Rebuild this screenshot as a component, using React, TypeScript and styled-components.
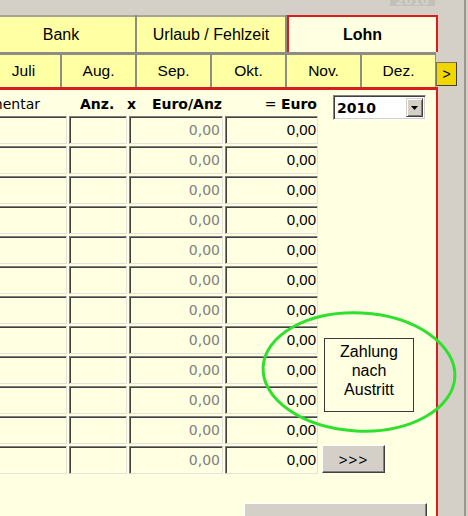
import React from 'react'
import styled, { createGlobalStyle, css } from 'styled-components'

const cream = '#ffffe1'
const tabYellow = '#ffffa4'
const red = '#d61e1e'
const winGrey = '#d4d0c8'
const lineGrey = '#8e8c84'

const GlobalStyle = createGlobalStyle`
  html, body {
    margin: 0;
    padding: 0;
    background: ${winGrey};
  }
  body {
    font-family: "Liberation Sans", Arial, sans-serif;
    overflow: hidden;
  }
`

const Window = styled.div`
  position: relative;
  width: 468px;
  height: 516px;
  overflow: hidden;
  display: flex;
  background: ${winGrey};
`

const Main = styled.div`
  width: 464px;
  display: flex;
  flex-direction: column;
  overflow: hidden;
`

const Edge = styled.div`
  width: 4px;
  box-sizing: border-box;
  border-left: 2px solid #9a968e;
`

const TopStrip = styled.div`
  height: 15px;
  flex: none;
  padding-left: 390px;
`

const GhostBox = styled.div`
  width: 45px;
  height: 6px;
  background: #c3c0ba;
  overflow: hidden;
  color: #d3d0ca;
  font: bold 12px "DejaVu Sans", sans-serif;
  line-height: 2px;
  text-align: center;
`

const TabRow = styled.div`
  width: 438px;
  height: 37px;
  flex: none;
  display: flex;
  gap: 2px;
  background: ${lineGrey};
`

const Tab = styled.div<{ $active?: boolean; $first?: boolean }>`
  width: 148px;
  box-sizing: border-box;
  display: flex;
  align-items: center;
  justify-content: center;
  font-size: 16px;
  color: #000;
  background: ${tabYellow};
  border-top: 2px solid #a6a492;
  margin-left: ${({ $first }) => ($first ? '-13px' : '0')};
  ${({ $active }) =>
    $active &&
    css`
      width: 151px;
      background: ${cream};
      border: 2px solid ${red};
      border-bottom: none;
      font-weight: bold;
    `}
`

const MonthRow = styled.div`
  height: 35px;
  flex: none;
  display: flex;
`

const MonthStrip = styled.div`
  width: 436px;
  box-sizing: border-box;
  display: flex;
  gap: 2px;
  padding-top: 3px;
  background: ${lineGrey};
`

const Month = styled.div<{ $first?: boolean }>`
  width: 73px;
  flex: none;
  display: flex;
  align-items: center;
  justify-content: center;
  font-size: 15.5px;
  background: ${tabYellow};
  margin-left: ${({ $first }) => ($first ? '-13px' : '0')};
`

const NextButton = styled.div`
  width: 21px;
  height: 24px;
  box-sizing: border-box;
  align-self: flex-end;
  margin-bottom: 1px;
  display: flex;
  align-items: center;
  justify-content: center;
  font-size: 14px;
  background: #f2d600;
  border: 1px solid #7c7458;
  border-right-color: #404040;
  border-bottom-color: #404040;
`

const Content = styled.div`
  width: 438px;
  flex: 1;
  box-sizing: border-box;
  background: ${cream};
  border-top: 3px solid ${red};
  border-right: 2px solid ${red};
  padding-top: 4px;
  display: flex;
  flex-direction: column;
`

const Grid = styled.div`
  margin-left: -13px;
  display: grid;
  grid-template-columns: 80px 58px 94px 93px 1fr;
  grid-template-rows: 20px repeat(12, 28px);
  column-gap: 2px;
  row-gap: 2px;
`

const HeadCell = styled.div<{ $justify?: string; $pad?: string }>`
  display: flex;
  align-items: center;
  justify-content: ${({ $justify = 'flex-start' }) => $justify};
  padding: ${({ $pad = '0' }) => $pad};
  font-family: "DejaVu Sans", Verdana, sans-serif;
  font-size: 14px;
  white-space: nowrap;
`

const Bold = styled.span`
  font-weight: bold;
`

const Field = styled.div<{ $muted?: boolean }>`
  box-sizing: border-box;
  height: 28px;
  display: flex;
  align-items: center;
  justify-content: flex-end;
  background: ${cream};
  border-top: 1px solid #808080;
  border-left: 1px solid #808080;
  border-bottom: 1px solid #e4e2da;
  border-right: 1px solid #e4e2da;
  box-shadow: inset 1px 1px 0 #404040;
  ${({ $muted }) =>
    $muted
      ? css`
          font-family: "DejaVu Sans", Verdana, sans-serif;
          font-size: 14px;
          color: #808080;
          padding-right: 2px;
        `
      : css`
          font-size: 15px;
          color: #000;
          padding-right: 1px;
          padding-bottom: 2px;
        `}
`

const YearSelect = styled.div`
  grid-column: 5;
  grid-row: 1;
  align-self: start;
  margin: 1px 0 0 13px;
  width: 93px;
  height: 25px;
  box-sizing: border-box;
  display: flex;
  align-items: center;
  background: #fff;
  border-top: 1px solid #808080;
  border-left: 1px solid #808080;
  border-bottom: 1px solid #fff;
  border-right: 1px solid #fff;
  box-shadow: inset 1px 1px 0 #404040, inset -1px -1px 0 ${winGrey};
  padding: 2px;
`

const YearText = styled.div`
  flex: 1;
  font: bold 14px "DejaVu Sans", Verdana, sans-serif;
  padding-left: 1px;
`

const DropButton = styled.div`
  width: 17px;
  height: 19px;
  box-sizing: border-box;
  display: flex;
  align-items: center;
  justify-content: center;
  background: ${winGrey};
  border-top: 1px solid ${winGrey};
  border-left: 1px solid ${winGrey};
  border-bottom: 1px solid #404040;
  border-right: 1px solid #404040;
  box-shadow: inset 1px 1px 0 #fff, inset -1px -1px 0 #808080;
`

const PayoutButton = styled.div`
  grid-column: 5;
  grid-row: 9 / span 3;
  align-self: end;
  margin: 0 0 2px 4px;
  width: 90px;
  height: 74px;
  box-sizing: border-box;
  padding-top: 3px;
  background: ${cream};
  border: 1px solid #3a3a3a;
  font-size: 16px;
  line-height: 19px;
  text-align: center;
`

const raised = css`
  box-sizing: border-box;
  background: ${winGrey};
  border-top: 1px solid #fff;
  border-left: 1px solid #fff;
  border-bottom: 1px solid #404040;
  border-right: 1px solid #404040;
  box-shadow: inset -1px -1px 0 #808080;
`

const MoreButton = styled.div`
  ${raised};
  grid-column: 5;
  grid-row: 13;
  align-self: start;
  margin: -1px 0 0 2px;
  width: 63px;
  height: 28px;
  display: flex;
  align-items: center;
  justify-content: center;
  font-size: 15px;
  letter-spacing: 1px;
`

const Footer = styled.div`
  display: flex;
  justify-content: flex-end;
  padding-right: 9px;
  margin-top: 29px;
`

const FooterButton = styled.div`
  ${raised};
  width: 183px;
  height: 30px;
`

const Annotation = styled.svg`
  position: absolute;
  left: 0;
  top: 0;
  pointer-events: none;
`

const rows = Array.from({ length: 12 }, (_, i) => i)

export default function App() {
  return (
    <>
      <GlobalStyle />
      <Window>
        <Main>
          <TopStrip>
            <GhostBox>2010</GhostBox>
          </TopStrip>
          <TabRow>
            <Tab $first>Bank</Tab>
            <Tab>Urlaub / Fehlzeit</Tab>
            <Tab $active>Lohn</Tab>
          </TabRow>
          <MonthRow>
            <MonthStrip>
              <Month $first>Juli</Month>
              <Month>Aug.</Month>
              <Month>Sep.</Month>
              <Month>Okt.</Month>
              <Month>Nov.</Month>
              <Month>Dez.</Month>
            </MonthStrip>
            <NextButton>&gt;</NextButton>
          </MonthRow>
          <Content>
            <Grid>
              <HeadCell $justify="flex-end" $pad="0 27px 0 0">
                Kommentar
              </HeadCell>
              <HeadCell $pad="0 0 0 11px">
                <Bold>Anz.</Bold>
              </HeadCell>
              <HeadCell $justify="space-between" $pad="0 1px 0 0">
                <Bold style={{ marginLeft: -2 }}>x</Bold>
                <Bold>Euro/Anz</Bold>
              </HeadCell>
              <HeadCell $justify="flex-end" $pad="0 1px 0 0">
                =&nbsp;<Bold>Euro</Bold>
              </HeadCell>
              <YearSelect>
                <YearText>2010</YearText>
                <DropButton>
                  <svg width="7" height="4" viewBox="0 0 7 4">
                    <path d="M0 0h7L3.5 4z" fill="#000" />
                  </svg>
                </DropButton>
              </YearSelect>
              {rows.map((r) => (
                <React.Fragment key={r}>
                  <Field style={{ gridColumn: 1, gridRow: r + 2 }} />
                  <Field style={{ gridColumn: 2, gridRow: r + 2 }} />
                  <Field $muted style={{ gridColumn: 3, gridRow: r + 2 }}>
                    0,00
                  </Field>
                  <Field style={{ gridColumn: 4, gridRow: r + 2 }}>0,00</Field>
                </React.Fragment>
              ))}
              <PayoutButton>
                Zahlung
                <br />
                nach
                <br />
                Austritt
              </PayoutButton>
              <MoreButton>&gt;&gt;&gt;</MoreButton>
            </Grid>
            <Footer>
              <FooterButton />
            </Footer>
          </Content>
        </Main>
        <Edge />
        <Annotation width="468" height="516" viewBox="0 0 468 516">
          <ellipse
            cx="359"
            cy="372"
            rx="96"
            ry="59"
            transform="rotate(3 359 372)"
            fill="none"
            stroke="#2fe02f"
            strokeWidth="3"
          />
        </Annotation>
      </Window>
    </>
  )
}
